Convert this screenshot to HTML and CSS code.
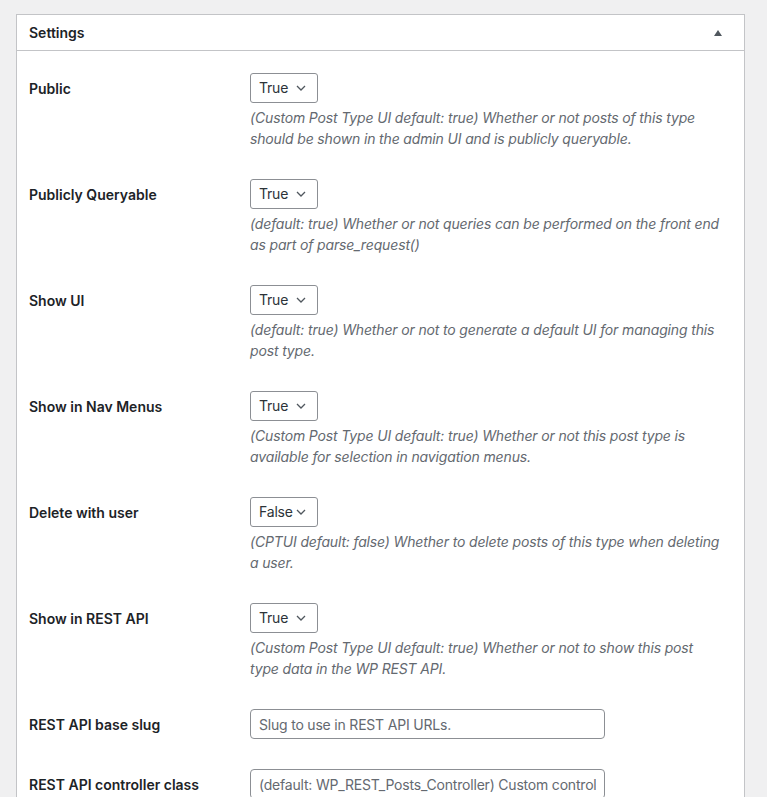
FILE: index.html
```html
<!DOCTYPE html>
<html lang="en">
<head>
<meta charset="utf-8">
<title>Settings</title>
<link rel="stylesheet" href="styles.css">
</head>
<body>
<div class="wrap">
  <div class="postbox">
    <div class="postbox-header">
      <h2 class="postbox-title">Settings</h2>
      <span class="toggle-arrow" aria-hidden="true"></span>
    </div>
    <div class="inside">
      <div class="form-table">
        <div class="row">
          <label class="row-label" for="public">Public</label>
          <div class="row-field">
            <select id="public" class="select"><option>True</option><option>False</option></select>
            <p class="description">(Custom Post Type UI default: true) Whether or not posts of this type should be shown in the admin UI and is publicly queryable.</p>
          </div>
        </div>
        <div class="row">
          <label class="row-label" for="pq">Publicly Queryable</label>
          <div class="row-field">
            <select id="pq" class="select"><option>True</option><option>False</option></select>
            <p class="description">(default: true) Whether or not queries can be performed on the front end as part of parse_request()</p>
          </div>
        </div>
        <div class="row">
          <label class="row-label" for="showui">Show UI</label>
          <div class="row-field">
            <select id="showui" class="select"><option>True</option><option>False</option></select>
            <p class="description">(default: true) Whether or not to generate a default UI for managing this post type.</p>
          </div>
        </div>
        <div class="row">
          <label class="row-label" for="navmenus">Show in Nav Menus</label>
          <div class="row-field">
            <select id="navmenus" class="select"><option>True</option><option>False</option></select>
            <p class="description">(Custom Post Type UI default: true) Whether or not this post type is available for selection in navigation menus.</p>
          </div>
        </div>
        <div class="row">
          <label class="row-label" for="deluser">Delete with user</label>
          <div class="row-field">
            <select id="deluser" class="select"><option>False</option><option>True</option></select>
            <p class="description">(CPTUI default: false) Whether to delete posts of this type when deleting a user.</p>
          </div>
        </div>
        <div class="row">
          <label class="row-label" for="rest">Show in REST API</label>
          <div class="row-field">
            <select id="rest" class="select"><option>True</option><option>False</option></select>
            <p class="description">(Custom Post Type UI default: true) Whether or not to show this post type data in the WP REST API.</p>
          </div>
        </div>
        <div class="row">
          <label class="row-label" for="restbase">REST API base slug</label>
          <div class="row-field">
            <input id="restbase" class="text-input" type="text" placeholder="Slug to use in REST API URLs.">
          </div>
        </div>
        <div class="row">
          <label class="row-label" for="restctrl">REST API controller class</label>
          <div class="row-field">
            <input id="restctrl" class="text-input" type="text" placeholder="(default: WP_REST_Posts_Controller) Custom controller to use instead of WP_REST_Posts_Controller.">
          </div>
        </div>
      </div>
    </div>
  </div>
</div>
</body>
</html>
```

FILE: styles.css
```css
html, body {
  margin: 0;
  padding: 0;
  background: #f0f0f1;
}

body {
  font-family: Inter, Roboto, "Liberation Sans", Arial, sans-serif;
  font-size: 14px;
  color: #1d2327;
}

.wrap {
  padding: 14px 22px 0 16px;
}

.postbox {
  background: #fff;
  border: 1px solid #c3c4c7;
}

.postbox-header {
  display: flex;
  align-items: center;
  justify-content: space-between;
  height: 35px;
  padding: 0 22px 0 12px;
  border-bottom: 1px solid #c3c4c7;
}

.postbox-title {
  margin: 1px 0 0;
  font-size: 14px;
  font-weight: 600;
  line-height: 1.4;
  color: #1d2327;
}

.toggle-arrow {
  width: 0;
  height: 0;
  border-left: 4px solid transparent;
  border-right: 4px solid transparent;
  border-bottom: 6px solid #50575e;
  margin-top: 1px;
}

.inside {
  padding: 7px 12px 0;
}

.row {
  display: grid;
  grid-template-columns: 210px 1fr;
}

.row-label {
  padding: 22px 10px 18px 0;
  font-size: 14px;
  font-weight: 600;
  line-height: 1.3;
  color: #1d2327;
}

.row-field {
  padding: 15px 10px;
}

.select {
  display: block;
  box-sizing: border-box;
  width: 68px;
  height: 30px;
  margin: 0 0 0 1px;
  padding: 0 20px 0 8px;
  font-family: inherit;
  font-size: 14px;
  letter-spacing: -0.2px;
  line-height: 28px;
  color: #2c3338;
  border: 1px solid #8c8f94;
  border-radius: 3px;
  background: #fff url("data:image/svg+xml,%3Csvg xmlns='http://www.w3.org/2000/svg' width='10' height='6' viewBox='0 0 10 6'%3E%3Cpath d='M1 1l4 4 4-4' fill='none' stroke='%2350575e' stroke-width='1.3'/%3E%3C/svg%3E") no-repeat right 11px center;
  background-size: 10px 6px;
  -webkit-appearance: none;
  appearance: none;
}

.description {
  margin: 4px 0 0 1px;
  font-size: 14px;
  font-style: italic;
  letter-spacing: -0.15px;
  line-height: 1.5;
  color: #646970;
}

.text-input {
  display: block;
  box-sizing: border-box;
  width: 355px;
  height: 30px;
  margin: 0 0 0 1px;
  padding: 0 8px;
  font-family: inherit;
  font-size: 14px;
  letter-spacing: -0.2px;
  color: #2c3338;
  background: #fff;
  border: 1px solid #8c8f94;
  border-radius: 4px;
}

.text-input::placeholder {
  color: #646970;
  opacity: 1;
}
```
